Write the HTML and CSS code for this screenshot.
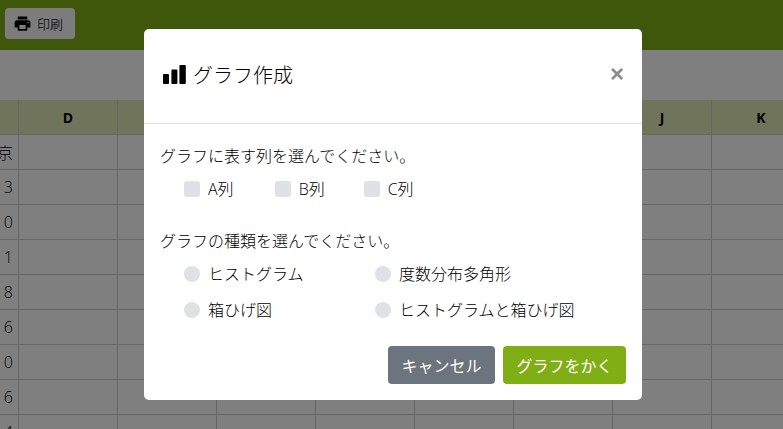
FILE: index.html
```html
<!DOCTYPE html>
<html lang="ja">
<head>
    <meta charset="UTF-8">
    <title>グラフ作成</title>
    <link rel="stylesheet" href="styles.css">
</head>
<body>
    <div class="topbar">
        <button class="print-btn">
            <svg class="print-icon" viewBox="0 0 24 24"><path d="M19 8H5c-1.66 0-3 1.34-3 3v6h4v4h12v-4h4v-6c0-1.66-1.34-3-3-3zm-3 11H8v-5h8v5zm3-7c-.55 0-1-.45-1-1s.45-1 1-1 1 .45 1 1-.45 1-1 1zm-1-9H6v4h12V3z"/></svg>
            印刷
        </button>
    </div>
    <div class="toolbar"></div>

    <table class="sheet">
        <thead>
            <tr><th>C</th><th>D</th><th>E</th><th>F</th><th>G</th><th>H</th><th>I</th><th>J</th><th>K</th></tr>
        </thead>
        <tbody>
            <tr><td>東京</td><td></td><td></td><td></td><td></td><td></td><td></td><td></td><td></td></tr>
            <tr><td>3</td><td></td><td></td><td></td><td></td><td></td><td></td><td></td><td></td></tr>
            <tr><td>0</td><td></td><td></td><td></td><td></td><td></td><td></td><td></td><td></td></tr>
            <tr><td>1</td><td></td><td></td><td></td><td></td><td></td><td></td><td></td><td></td></tr>
            <tr><td>8</td><td></td><td></td><td></td><td></td><td></td><td></td><td></td><td></td></tr>
            <tr><td>6</td><td></td><td></td><td></td><td></td><td></td><td></td><td></td><td></td></tr>
            <tr><td>0</td><td></td><td></td><td></td><td></td><td></td><td></td><td></td><td></td></tr>
            <tr><td>6</td><td></td><td></td><td></td><td></td><td></td><td></td><td></td><td></td></tr>
            <tr><td>4</td><td></td><td></td><td></td><td></td><td></td><td></td><td></td><td></td></tr>
        </tbody>
    </table>

    <div class="backdrop"></div>

    <div class="modal-wrap">
        <div class="modal">
            <div class="modal-header">
                <h5 class="modal-title">
                    <svg class="chart-icon" viewBox="0 0 23 19"><rect x="0" y="9" width="6" height="10" rx="1"/><rect x="8.4" y="4.5" width="6" height="14.5" rx="1"/><rect x="16.4" y="0" width="6.4" height="19" rx="1"/></svg>
                    グラフ作成
                </h5>
                <span class="close">×</span>
            </div>
            <div class="modal-body">
                <p class="question">グラフに表す列を選んでください。</p>
                <div class="check-row">
                    <label class="opt col-a"><span class="box"></span>A列</label>
                    <label class="opt col-b"><span class="box"></span>B列</label>
                    <label class="opt"><span class="box"></span>C列</label>
                </div>
                <p class="question second">グラフの種類を選んでください。</p>
                <div class="radio-grid">
                    <label class="opt"><span class="box round"></span>ヒストグラム</label>
                    <label class="opt"><span class="box round"></span>度数分布多角形</label>
                    <label class="opt"><span class="box round"></span>箱ひげ図</label>
                    <label class="opt"><span class="box round"></span>ヒストグラムと箱ひげ図</label>
                </div>
            </div>
            <div class="modal-footer">
                <button class="btn btn-gray">キャンセル</button>
                <button class="btn btn-green">グラフをかく</button>
            </div>
        </div>
    </div>
</body>
</html>
```

FILE: styles.css
```css
* {
    box-sizing: border-box;
}

html, body {
    height: 100%;
}

body {
    margin: 0;
    overflow: hidden;
    background-color: #fff;
    color: #000;
    font-family: "Open Sans", "Noto Sans CJK JP", sans-serif;
    font-size: 16px;
    font-weight: 300;
}

.topbar {
    height: 50px;
    padding: 8px 5px;
    background-color: #7fae15;
}

.print-btn {
    display: flex;
    align-items: center;
    gap: 5px;
    width: 70px;
    height: 31px;
    padding: 0 0 0 8px;
    border: none;
    border-radius: 4px;
    background-color: #f8f9fa;
    color: #444;
    font-family: inherit;
    font-size: 13px;
}

.print-icon {
    width: 19px;
    height: 19px;
    fill: #000;
}

.toolbar {
    height: 50px;
}

.sheet {
    margin-left: -81px;
    border-collapse: collapse;
    table-layout: fixed;
    width: 891px;
}

.sheet th, .sheet td {
    width: 99px;
    border: 1px solid #cfcfcf;
    padding: 0 5px;
}

.sheet th {
    height: 34px;
    padding-top: 2px;
    border-top: none;
    background-color: #dfe9b5;
    font-size: 14px;
    font-weight: 700;
    text-align: center;
}

.sheet td {
    height: 35px;
    text-align: right;
    font-size: 16px;
}

.backdrop {
    position: fixed;
    inset: 0;
    background-color: rgba(0, 0, 0, 0.5);
}

.modal-wrap {
    position: fixed;
    inset: 0;
    padding: 29px 0 0 144px;
}

.modal {
    width: 498px;
    height: 371px;
    border-radius: 5px;
    background-color: #fff;
}

.modal-header {
    display: flex;
    align-items: center;
    justify-content: space-between;
    height: 95px;
    padding: 0 18px 0 19px;
    border-bottom: 1px solid #dee2e6;
}

.modal-title {
    display: flex;
    align-items: center;
    gap: 7px;
    margin: 0;
    font-size: 20px;
    font-weight: 300;
    line-height: 30px;
}

.chart-icon {
    width: 23px;
    height: 19px;
    margin-bottom: 3px;
    fill: #000;
}

.close {
    margin-bottom: 4px;
    color: #8c8c8c;
    font-family: "Liberation Sans", sans-serif;
    font-size: 24px;
    font-weight: 700;
    line-height: 1;
}

.modal-body {
    padding: 20px 16px 0;
}

.question {
    margin: 0;
    line-height: 24px;
}

.question.second {
    margin-top: 29px;
}

.check-row {
    display: flex;
    margin-top: 8px;
    padding-left: 24px;
}

.opt {
    display: flex;
    align-items: center;
    height: 24px;
    font-size: 16px;
}

.col-a {
    margin-right: 41px;
}

.col-b {
    margin-right: 39px;
}

.box {
    flex: none;
    width: 16px;
    height: 16px;
    margin-top: 2px;
    margin-right: 8px;
    border-radius: 3px;
    background-color: #dee2e6;
}

.box.round {
    border-radius: 50%;
}

.radio-grid {
    display: grid;
    grid-template-columns: 191px auto;
    row-gap: 12px;
    margin-top: 8px;
    padding-left: 24px;
}

.modal-footer {
    display: flex;
    justify-content: flex-end;
    gap: 8px;
    margin-top: 25px;
    padding-right: 16px;
}

.btn {
    height: 38px;
    padding: 0 13.5px;
    border: none;
    border-radius: 4px;
    color: #fff;
    font-family: inherit;
    font-size: 16px;
}

.btn-gray {
    background-color: #6c757d;
}

.btn-green {
    background-color: #7fae15;
}
```
